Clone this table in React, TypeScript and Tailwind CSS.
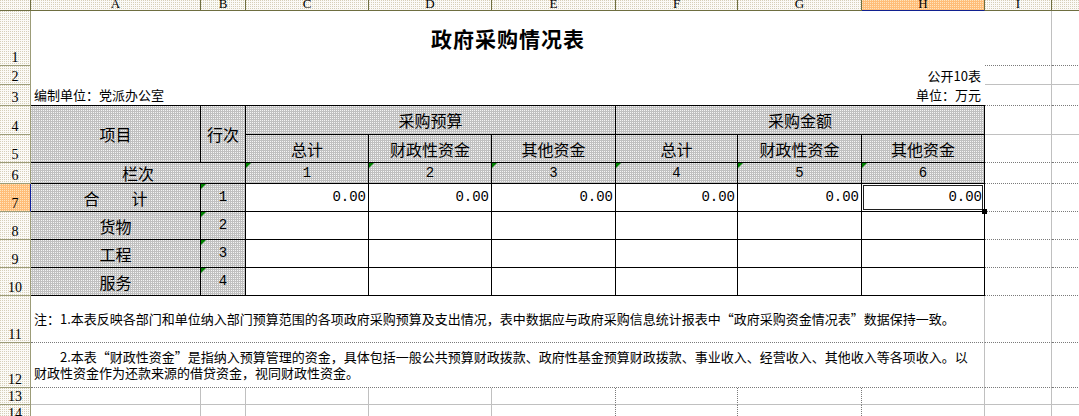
import React from "react";

const CJK = "font-['Noto_Sans_CJK_SC',sans-serif]";
const MONO = "font-['Liberation_Mono',monospace]";
const SERIF = "font-['Liberation_Serif',serif]";

const HDR_BG =
  "bg-[image:linear-gradient(transparent_1px,#fbfaf6_1px),linear-gradient(90deg,#d6cfb8_1px,#fbfaf6_1px)] bg-[length:2px_2px]";
const SEL_BG =
  "bg-[image:linear-gradient(transparent_1px,#ffbd78_1px),linear-gradient(90deg,#ffe4bc_1px,#ffbd78_1px)] bg-[length:2px_2px]";
const GRAY_BG =
  "bg-[image:linear-gradient(transparent_1px,#c0c0c0_1px),linear-gradient(90deg,#f4f4f4_1px,#c0c0c0_1px)] bg-[length:2px_2px]";

const CS = [
  "",
  "col-start-1",
  "col-start-2",
  "col-start-3",
  "col-start-4",
  "col-start-5",
  "col-start-6",
  "col-start-7",
  "col-start-8",
  "col-start-9",
  "col-start-10",
  "col-start-11",
];
const RS = [
  "",
  "row-start-1",
  "row-start-2",
  "row-start-3",
  "row-start-4",
  "row-start-5",
  "row-start-6",
  "row-start-7",
  "row-start-8",
  "row-start-9",
  "row-start-10",
  "row-start-11",
  "row-start-12",
  "row-start-13",
  "row-start-14",
  "row-start-15",
];

function G({
  c,
  r,
  cls = "",
  children,
}: {
  c: number;
  r: number;
  cls?: string;
  children?: React.ReactNode;
}) {
  return <div className={`${CS[c]} ${RS[r]} ${cls}`}>{children}</div>;
}

function Tri() {
  return (
    <div className="absolute left-0 top-0 w-[5px] h-[5px] bg-[#008000] [clip-path:polygon(0_0,100%_0,0_100%)]" />
  );
}

const TB = "border-r border-b border-black";
const DOT_B = "[border-bottom:1px_dotted_#7a7a7a]";
const SOL_B = "[border-bottom:1px_solid_#c0c0c0]";

export default function App() {
  const letters = ["", "A", "B", "C", "D", "E", "F", "G", "H", "I", ""];
  const solidRows = [2, 4];
  return (
    <div lang="zh-CN" className="w-[1079px] h-[416px] overflow-hidden bg-white text-black">
      <div className="grid grid-cols-[31px_170px_45px_123px_123px_124px_122px_124px_123px_67px_28px] grid-rows-[11px_55px_19px_21px_29px_28px_21px_28px_28px_28px_28px_47px_45px_17px_17px]">
        {/* column headers */}
        {letters.map((l, i) => {
          const c = i + 1;
          const sel = c === 9;
          const last = c === 11;
          return (
            <G
              key={"ch" + c}
              c={c}
              r={1}
              cls={`${sel ? SEL_BG : HDR_BG} ${last ? "" : "border-r"} border-b ${
                sel ? "border-r-[#6e6e40] border-b-[#102090]" : "border-[#6e6e40]"
              } overflow-hidden flex justify-center ${SERIF} text-[13px] leading-[11px]`}
            >
              <span className="relative -top-[2px]">{l}</span>
            </G>
          );
        })}

        {/* row headers */}
        {Array.from({ length: 14 }, (_, k) => {
          const n = k + 1;
          const sel = n === 7;
          return (
            <G
              key={"rh" + n}
              c={1}
              r={n + 1}
              cls={`${sel ? SEL_BG : HDR_BG} border-r border-b ${
                sel ? "border-r-[#1020a0] border-b-[#9c9c78]" : "border-[#9c9c78]"
              } flex items-end justify-center overflow-hidden ${SERIF} text-[14px] leading-[14px]`}
            >
              <span>{n}</span>
            </G>
          );
        })}

        {/* right side gridlines rows 1-12 */}
        {Array.from({ length: 12 }, (_, k) => {
          const n = k + 1;
          const b = solidRows.includes(n) ? SOL_B : DOT_B;
          return (
            <React.Fragment key={"rs" + n}>
              <G c={10} r={n + 1} cls={`border-r border-r-[#c0c0c0] ${b}`} />
              <G c={11} r={n + 1} cls={b} />
            </React.Fragment>
          );
        })}

        {/* rows 13-14 */}
        {[14, 15].map((r) =>
          [2, 3, 4, 5, 6, 7, 8, 9, 10, 11].map((c) => {
            const right =
              c === 11
                ? ""
                : c >= 6 && c <= 8
                ? "[border-right:1px_dotted_#7a7a7a]"
                : "[border-right:1px_solid_#c0c0c0]";
            return <G key={`g${r}-${c}`} c={c} r={r} cls={`${right} ${SOL_B}`} />;
          })
        )}

        {/* Row 1: title */}
        <G c={2} r={2} cls={`col-span-8 flex items-center justify-center ${CJK}`}>
          <span className="text-[21px] font-bold leading-[24px] tracking-[1px] relative -top-[1px]">
            政府采购情况表
          </span>
        </G>

        {/* Row 2 */}
        <G c={2} r={3} cls={`col-span-8 flex items-center justify-end pr-[4px] ${CJK} text-[13px] leading-[16px]`}>
          公开10表
        </G>

        {/* Row 3 */}
        <G
          c={2}
          r={4}
          cls={`col-span-8 flex items-center justify-between pl-[3px] pr-[4px] border-b border-black ${CJK} text-[13px] leading-[16px]`}
        >
          <span>编制单位：党派办公室</span>
          <span>单位：万元</span>
        </G>

        {/* Row 4-5 headers */}
        <G c={2} r={5} cls={`row-span-2 ${GRAY_BG} ${TB} flex items-center justify-center ${CJK} text-[16px]`}>
          项目
        </G>
        <G c={3} r={5} cls={`row-span-2 ${GRAY_BG} ${TB} flex items-center justify-center ${CJK} text-[16px]`}>
          行次
        </G>
        <G c={4} r={5} cls={`col-span-3 ${GRAY_BG} ${TB} flex items-center justify-center ${CJK} text-[16px]`}>
          采购预算
        </G>
        <G c={7} r={5} cls={`col-span-3 ${GRAY_BG} ${TB} flex items-center justify-center ${CJK} text-[16px]`}>
          采购金额
        </G>
        {["总计", "财政性资金", "其他资金", "总计", "财政性资金", "其他资金"].map((t, i) => (
          <G
            key={"h5" + i}
            c={4 + i}
            r={6}
            cls={`${GRAY_BG} ${TB} flex items-center justify-center ${CJK} text-[16px]`}
          >
            {t}
          </G>
        ))}

        {/* Row 6 */}
        <G c={2} r={7} cls={`col-span-2 ${GRAY_BG} ${TB} flex items-center justify-center ${CJK} text-[16px]`}>
          栏次
        </G>
        {[1, 2, 3, 4, 5, 6].map((n, i) => (
          <G
            key={"n6" + n}
            c={4 + i}
            r={7}
            cls={`relative ${GRAY_BG} ${TB} flex items-center justify-center ${MONO} text-[14px]`}
          >
            <Tri />
            {n}
          </G>
        ))}

        {/* Rows 7-10 */}
        {[
          { label: "合计", n: 1, vals: true },
          { label: "货物", n: 2, vals: false },
          { label: "工程", n: 3, vals: false },
          { label: "服务", n: 4, vals: false },
        ].map((row, k) => {
          const r = 8 + k;
          return (
            <React.Fragment key={"row" + r}>
              <G c={2} r={r} cls={`${GRAY_BG} ${TB} flex items-center justify-center ${CJK} text-[16px]`}>
                {k === 0 ? (
                  <span className="flex gap-[32px]">
                    <span>合</span>
                    <span>计</span>
                  </span>
                ) : (
                  row.label
                )}
              </G>
              <G
                c={3}
                r={r}
                cls={`relative ${GRAY_BG} ${TB} flex items-center justify-center ${MONO} text-[14px]`}
              >
                <Tri />
                {row.n}
              </G>
              {[4, 5, 6, 7, 8, 9].map((c) => (
                <G
                  key={`v${r}-${c}`}
                  c={c}
                  r={r}
                  cls={`${c === 9 && k === 0 ? "relative" : ""} bg-white ${TB} flex items-center justify-end pr-[2px] ${MONO} text-[14px]`}
                >
                  {row.vals ? "0.00" : ""}
                  {c === 9 && k === 0 && (
                    <>
                      <div className="absolute inset-0 border border-white" />
                      <div className="absolute inset-[1px] border border-[#202020]" />
                      <div className="absolute -right-[3px] -bottom-[3px] w-[5px] h-[5px] bg-black z-10" />
                    </>
                  )}
                </G>
              ))}
            </React.Fragment>
          );
        })}

        {/* Row 11 */}
        <G
          c={2}
          r={12}
          cls={`col-span-8 bg-white border-r border-r-[#c0c0c0] ${DOT_B} flex items-center pl-[3px] ${CJK} text-[13px] leading-[16px] whitespace-nowrap`}
        >
          注：1.本表反映各部门和单位纳入部门预算范围的各项政府采购预算及支出情况，表中数据应与政府采购信息统计报表中“政府采购资金情况表”数据保持一致。
        </G>

        {/* Row 12 */}
        <G
          c={2}
          r={13}
          cls={`col-span-8 bg-white border-r border-r-[#c0c0c0] ${DOT_B} flex items-center pl-[3px] ${CJK} text-[13px] leading-[16px] whitespace-nowrap`}
        >
          <div>
            <div>
              {"\u3000\u3000"}2.本表“财政性资金”是指纳入预算管理的资金，具体包括一般公共预算财政拨款、政府性基金预算财政拨款、事业收入、经营收入、其他收入等各项收入。以
            </div>
            <div>财政性资金作为还款来源的借贷资金，视同财政性资金。</div>
          </div>
        </G>
      </div>
    </div>
  );
}
